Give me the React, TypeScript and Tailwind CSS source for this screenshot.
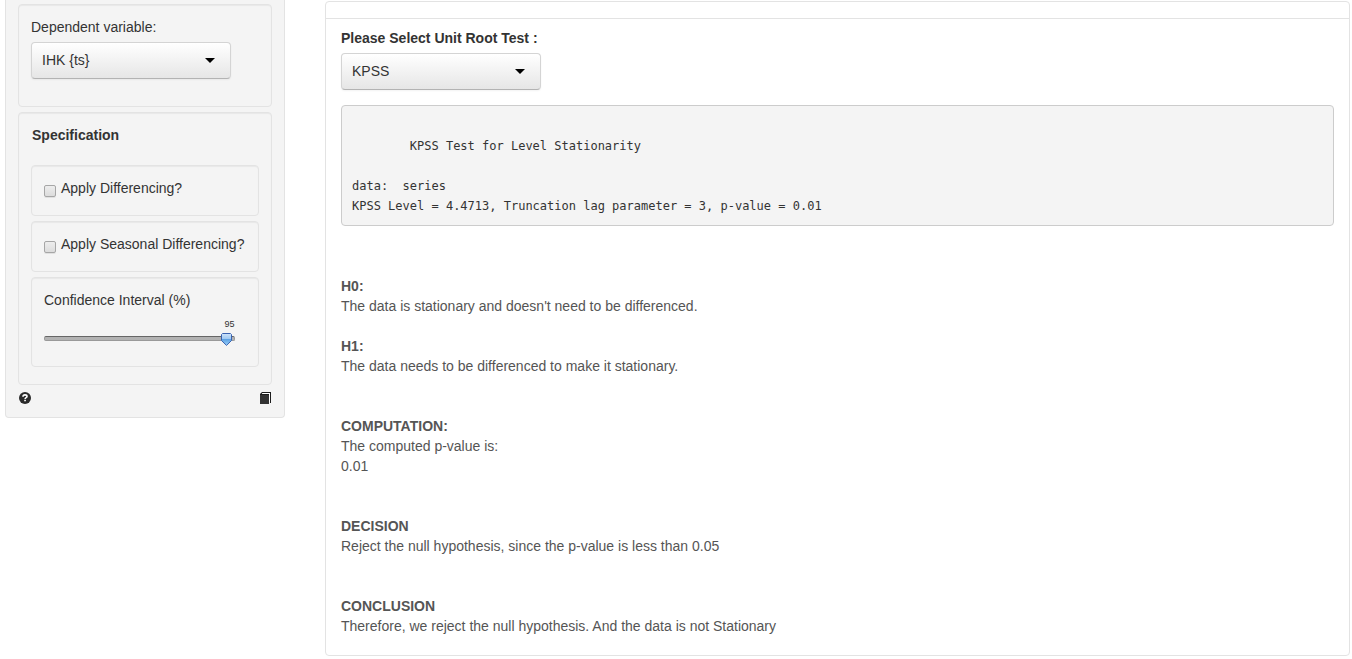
import { useState, type ReactNode } from "react";

const panel =
  "rounded-[4px] border border-[#e3e3e3] bg-[#f4f4f4] shadow-[inset_0_1px_1px_rgba(0,0,0,0.05)]";

function SelectBox({
  id,
  options,
}: {
  id: string;
  options: string[];
}) {
  return (
    <div className="relative w-[200px] max-w-full">
      <select
        id={id}
        className="block h-[37px] w-full appearance-none rounded-[4px] border border-[#d4d4d4] border-b-[#b3b3b3] bg-linear-to-b from-white to-[#e6e6e6] pr-8 pb-[2px] pl-[10px] text-[14px] leading-5 text-[#333] shadow-[0_1px_2px_rgba(0,0,0,0.05)]"
      >
        {options.map((option) => (
          <option key={option}>{option}</option>
        ))}
      </select>
      <svg
        className="pointer-events-none absolute top-[16px] right-4 h-[5px] w-[10px]"
        viewBox="0 0 10 5"
        aria-hidden="true"
      >
        <path d="M0 0h10L5 5z" fill="#000" />
      </svg>
    </div>
  );
}

function CheckRow({ id, label }: { id: string; label: string }) {
  return (
    <div className={`${panel} flex h-[51px] items-start px-3 pt-3`}>
      <input
        id={id}
        type="checkbox"
        className="mt-[7px] mr-[5px] size-3 shrink-0 appearance-none rounded-[2px] border border-[#a6a6a6] bg-linear-to-b from-[#ededed] to-[#dcdcdc] shadow-[0_1px_0_rgba(0,0,0,0.08)] checked:bg-[#555] checked:bg-none"
      />
      <label htmlFor={id} className="whitespace-nowrap">
        {label}
      </label>
    </div>
  );
}

function ConfidenceSlider() {
  const [value, setValue] = useState(95);
  return (
    <div className={`${panel} h-[90px] px-3 pt-3`}>
      <label htmlFor="confidence">Confidence Interval (%)</label>
      <div className="relative mt-[22px] mr-[11px] h-[14px]">
        <div className="absolute inset-x-0 top-[4px] h-[5px] rounded-[2px] border border-[#999] border-t-[#666] bg-[#b2b2b2]" />
        <div
          className="absolute top-0 -ml-1 w-3"
          style={{ left: `${value}%` }}
        >
          <span className="absolute -top-[14px] left-[3px] text-[9px] leading-3 text-[#333]">
            {value}
          </span>
          <svg
            className="mt-px h-[13px] w-[11px]"
            viewBox="0 0 11 13"
            aria-hidden="true"
          >
            <defs>
              <linearGradient id="thumb" x1="0" y1="0" x2="0" y2="1">
                <stop offset="0" stopColor="#cfe4fa" />
                <stop offset="0.42" stopColor="#a3cbf3" />
                <stop offset="0.5" stopColor="#5fa3e4" />
                <stop offset="1" stopColor="#9bd2fa" />
              </linearGradient>
            </defs>
            <path
              d="M1.5.5h8l1 1v6L5.5 12.4.5 7.5v-6z"
              fill="url(#thumb)"
              stroke="#3a62b0"
            />
          </svg>
        </div>
        <input
          id="confidence"
          type="range"
          min={0}
          max={100}
          value={value}
          onChange={(e) => setValue(Number(e.target.value))}
          className="absolute inset-0 m-0 h-full w-full cursor-pointer opacity-0"
        />
      </div>
    </div>
  );
}

function Result({
  title,
  children,
}: {
  title: string;
  children: ReactNode;
}) {
  return (
    <section>
      <h2 className="font-bold">{title}</h2>
      {children}
    </section>
  );
}

function Sidebar() {
  return (
    <aside className="w-[280px] shrink-0 rounded-b-[4px] border border-t-0 border-[#e3e3e3] bg-[#f4f4f4] px-3 pt-1 pb-[13px]">
      <div className={`${panel} px-3 pt-3 pb-[27px]`}>
        <label htmlFor="dependent" className="mb-[5px] block">
          Dependent variable:
        </label>
        <SelectBox id="dependent" options={["IHK {ts}"]} />
      </div>

      <div className={`${panel} mt-[5px] px-3 pt-3 pb-[17px]`}>
        <h2 className="mb-5 pl-px font-bold">Specification</h2>
        <div className="flex flex-col gap-[5px]">
          <CheckRow id="differencing" label="Apply Differencing?" />
          <CheckRow id="seasonal" label="Apply Seasonal Differencing?" />
          <ConfidenceSlider />
        </div>
      </div>

      <div className="mt-[7px] flex items-center justify-between pl-px">
        <button type="button" aria-label="Help">
          <svg className="block size-3" viewBox="0 0 12 12">
            <circle cx="6" cy="6" r="6" fill="#2b2b2b" />
            <path
              d="M4 4.7C4 3.5 4.8 2.9 6 2.9s2 .6 2 1.6C8 5.7 6.1 5.6 6.1 7"
              fill="none"
              stroke="#fff"
              strokeWidth="1.6"
            />
            <path d="M5.2 7.8h1.7v1.5H5.2z" fill="#fff" />
          </svg>
        </button>
        <button type="button" aria-label="Report">
          <svg className="block size-3" viewBox="0 0 12 12">
            <path d="M0 3h9v9H0z" fill="#333" />
            <path d="M0 3V2l2-2h9v11h-1V1.2H2.5L1.6 2H9v1z" fill="#1c1c1c" />
            <path d="M2 2h7v8h1V1H2.5z" fill="#fff" />
          </svg>
        </button>
      </div>
    </aside>
  );
}

export default function App() {
  return (
    <div className="flex items-start gap-10 bg-white pr-[2px] pl-[5px] font-['Liberation_Sans',Arial,sans-serif] text-[14px] leading-5 text-[#333]">
      <Sidebar />
      <main className="mt-px min-w-0 flex-1 rounded-[4px] border border-[#e3e3e3] bg-white">
        <div className="box-content h-4 border-b border-[#e3e3e3]" />
        <div className="px-[15px] pt-[9px] pb-[19px]">
          <label htmlFor="unit-root" className="mb-[5px] block font-bold">
            Please Select Unit Root Test :
          </label>
          <SelectBox id="unit-root" options={["KPSS"]} />
          <pre className="mt-[15px] overflow-x-auto rounded-[4px] border border-[#ccc] bg-[#f4f4f4] px-[10px] pt-[10px] pb-[9px] font-['DejaVu_Sans_Mono',monospace] text-[12px] leading-5 [tab-size:8]">
            {
              "\n\tKPSS Test for Level Stationarity\n\ndata:  series\nKPSS Level = 4.4713, Truncation lag parameter = 3, p-value = 0.01"
            }
          </pre>
          <div className="mt-[50px] flex flex-col gap-10 text-[#555]">
            <div className="flex flex-col gap-5">
              <Result title="H0:">
                <p>The data is stationary and doesn't need to be differenced.</p>
              </Result>
              <Result title="H1:">
                <p>The data needs to be differenced to make it stationary.</p>
              </Result>
            </div>
            <Result title="COMPUTATION:">
              <p>The computed p-value is:</p>
              <p>0.01</p>
            </Result>
            <Result title="DECISION">
              <p>Reject the null hypothesis, since the p-value is less than 0.05</p>
            </Result>
            <Result title="CONCLUSION">
              <p>
                Therefore, we reject the null hypothesis. And the data is not
                Stationary
              </p>
            </Result>
          </div>
        </div>
      </main>
    </div>
  );
}
